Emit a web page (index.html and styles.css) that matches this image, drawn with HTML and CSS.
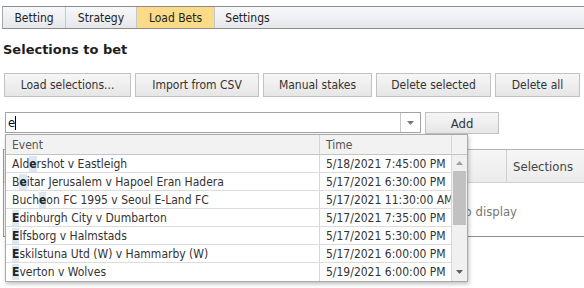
FILE: index.html
```html
<!DOCTYPE html>
<html lang="en">
<head>
  <meta charset="UTF-8" />
  <title>Load Bets</title>
  <link rel="stylesheet" href="styles.css" />
</head>
<body>

<!-- Tabs -->
<div class="tabs">
  <div class="tab">Betting</div>
  <div class="tab">Strategy</div>
  <div class="tab active">Load Bets</div>
  <div class="tab">Settings</div>
</div>

<h2 class="title">Selections to bet</h2>

<div class="toolbar">
  <button class="btn w-load">Load selections...</button>
  <button class="btn w-import">Import from CSV</button>
  <button class="btn w-manual">Manual stakes</button>
  <button class="btn w-delsel">Delete selected</button>
  <button class="btn w-delall">Delete all</button>
</div>

<div class="combo-area">
  <div class="combo-row">
    <div class="combo">
      <span class="combo-text">e</span><span class="caret"></span>
      <span class="combo-arrow"><svg width="7" height="4" viewBox="0 0 7 4"><path d="M0 0h7L3.5 4z" fill="#777"/></svg></span>
    </div>
    <button class="btn add-btn">Add</button>
  </div>

  <!-- grid behind the dropdown -->
  <div class="grid">
    <div class="grid-head">
      <div class="gh-fill"></div>
      <div class="gh-col">Selections</div>
    </div>
    <div class="grid-empty">No data to display</div>
  </div>

  <!-- dropdown list -->
  <div class="dropdown">
    <div class="dd-main">
      <div class="dd-head">
        <div class="c-event">Event</div>
        <div class="c-time">Time</div>
      </div>
      <div class="dd-row"><div class="c-event">Ald<b>e</b>rshot v Eastleigh</div><div class="c-time">5/18/2021 7:45:00 PM</div></div>
      <div class="dd-row"><div class="c-event">B<b>e</b>itar Jerusalem v Hapoel Eran Hadera</div><div class="c-time">5/17/2021 6:30:00 PM</div></div>
      <div class="dd-row"><div class="c-event">Buch<b>e</b>on FC 1995 v Seoul E-Land FC</div><div class="c-time">5/17/2021 11:30:00 AM</div></div>
      <div class="dd-row"><div class="c-event"><b>E</b>dinburgh City v Dumbarton</div><div class="c-time">5/17/2021 7:35:00 PM</div></div>
      <div class="dd-row"><div class="c-event"><b>E</b>lfsborg v Halmstads</div><div class="c-time">5/17/2021 5:30:00 PM</div></div>
      <div class="dd-row"><div class="c-event"><b>E</b>skilstuna Utd (W) v Hammarby (W)</div><div class="c-time">5/17/2021 6:00:00 PM</div></div>
      <div class="dd-row"><div class="c-event"><b>E</b>verton v Wolves</div><div class="c-time">5/19/2021 6:00:00 PM</div></div>
    </div>
    <div class="dd-scroll">
      <div class="sb-corner"></div>
      <div class="sb-track">
        <svg class="sb-arrow" width="7" height="4" viewBox="0 0 7 4"><path d="M0 4h7L3.5 0z" fill="#a0a0a0"/></svg>
        <div class="sb-thumb"></div>
        <svg class="sb-arrow sb-down" width="7" height="4" viewBox="0 0 7 4"><path d="M0 0h7L3.5 4z" fill="#606060"/></svg>
      </div>
    </div>
  </div>
</div>

</body>
</html>
```

FILE: styles.css
```css
/* Reset & Global */
* {
  box-sizing: border-box;
}
body {
  margin: 0;
  background: #fff;
  color: #333;
  font-family: 'DejaVu Sans Condensed', 'DejaVu Sans', Verdana, sans-serif;
  font-stretch: condensed;
  font-size: 12px;
  width: 584px;
  height: 288px;
  overflow: hidden;
}

/* Tabs */
.tabs {
  display: flex;
  margin: 6px 0 0 2px;
  height: 23px;
  border-top: 1px solid #8c8c8c;
  border-bottom: 1px solid #8c8c8c;
  border-left: 1px solid #a8a8a8;
  background: linear-gradient(#f7f8fa, #e5e7ea);
}
.tab {
  display: flex;
  align-items: center;
  justify-content: center;
  border-right: 1px solid #c6c8cc;
  color: #222;
}
.tab:nth-child(1) { width: 63px; }
.tab:nth-child(2) { width: 71px; }
.tab:nth-child(3) { width: 78px; }
.tab:nth-child(4) { width: 65px; border-right: none; }
.tab.active {
  background: #fbdb87;
}

/* Title */
.title {
  margin: 13px 0 0 3px;
  font-family: 'DejaVu Sans', Verdana, sans-serif;
  font-stretch: normal;
  font-size: 13px;
  font-weight: bold;
  color: #1e1e1e;
  line-height: 16px;
}

/* Buttons */
.btn {
  font-family: inherit;
  font-stretch: condensed;
  font-size: 12px;
  color: #333;
  height: 24px;
  padding: 0;
  border: 1px solid #c2c2c2;
  background: linear-gradient(#f6f6f6, #e6e6e6);
}
.toolbar {
  display: flex;
  gap: 4px;
  margin: 15px 0 0 4px;
}
.w-load { width: 127px; }
.w-import { width: 124px; }
.w-manual { width: 109px; }
.w-delsel { width: 115px; }
.w-delall { width: 85px; }

/* Combo */
.combo-area {
  position: relative;
  margin-top: 15px;
}
.combo-row {
  display: flex;
  gap: 4px;
  padding-left: 5px;
  height: 22px;
}
.combo {
  position: relative;
  width: 416px;
  height: 21px;
  border: 1px solid #a3a3a3;
  background: #fff;
  display: flex;
  align-items: center;
  padding-left: 2px;
  font-size: 13px;
  color: #111;
}
.caret {
  display: inline-block;
  width: 1px;
  height: 14px;
  background: #000;
}
.combo-arrow {
  position: absolute;
  right: 0;
  top: 0;
  bottom: 0;
  width: 20px;
  border-left: 1px solid #c8c8c8;
  display: flex;
  align-items: center;
  justify-content: center;
}
.add-btn {
  width: 74px;
  height: 22px;
  font-size: 13px;
}

/* Grid underneath */
.grid {
  margin: 15px 0 0 3px;
  border-left: 1px solid #9a9a9a;
  height: 88px;
  border-bottom: 1px solid #8c8c8c;
}
.grid-head {
  display: flex;
  height: 34px;
  border-top: 1px solid #b4b4b4;
  border-bottom: 1px solid #cfcfcf;
  background: linear-gradient(#f6f6f6, #ececec);
}
.gh-fill {
  flex: 1;
}
.gh-col {
  width: 78px;
  border-left: 1px solid #cfcfcf;
  display: flex;
  align-items: center;
  padding-left: 6px;
  font-size: 13px;
  color: #444;
}
.grid-empty {
  text-align: right;
  padding: 21px 67px 0 0;
  font-size: 13px;
  color: #777;
}

/* Dropdown */
.dropdown {
  position: absolute;
  left: 5px;
  top: 22px;
  width: 463px;
  display: flex;
  border: 1px solid #a9a9a9;
  background: #fff;
  box-shadow: 1px 2px 4px rgba(0, 0, 0, 0.25);
  font-size: 12px;
  line-height: 16px;
}
.dd-main {
  flex: 1;
  min-width: 0;
}
.dd-head,
.dd-row {
  display: flex;
  height: 18px;
  align-items: center;
  border-bottom: 1px solid #dcdcdc;
}
.dd-head {
  height: 20px;
  background: #f2f2f2;
  border-bottom: 1px solid #c4c4c4;
  color: #555;
}
.c-event {
  width: 314px;
  padding-left: 6px;
  height: 100%;
  display: flex;
  align-items: center;
  border-right: 1px solid #d6d6d6;
  white-space: nowrap;
}
.c-time {
  flex: 1;
  min-width: 0;
  padding-left: 6px;
  white-space: nowrap;
  overflow: hidden;
}
.dd-row b {
  font-weight: bold;
  background: #dde6f3;
  color: #222;
}
.dd-row:last-child {
  border-bottom: none;
}

/* Scrollbar */
.dd-scroll {
  width: 16px;
  border-left: 1px solid #d6d6d6;
  display: flex;
  flex-direction: column;
}
.sb-corner {
  height: 20px;
  background: #f2f2f2;
  border-bottom: 1px solid #c4c4c4;
}
.sb-track {
  flex: 1;
  background: #f0f0f0;
  display: flex;
  flex-direction: column;
  align-items: center;
  padding-top: 6px;
}
.sb-thumb {
  width: 13px;
  height: 54px;
  margin-top: 6px;
  background: #c1c1c1;
}
.sb-down {
  margin-top: auto;
  margin-bottom: 7px;
}
```
